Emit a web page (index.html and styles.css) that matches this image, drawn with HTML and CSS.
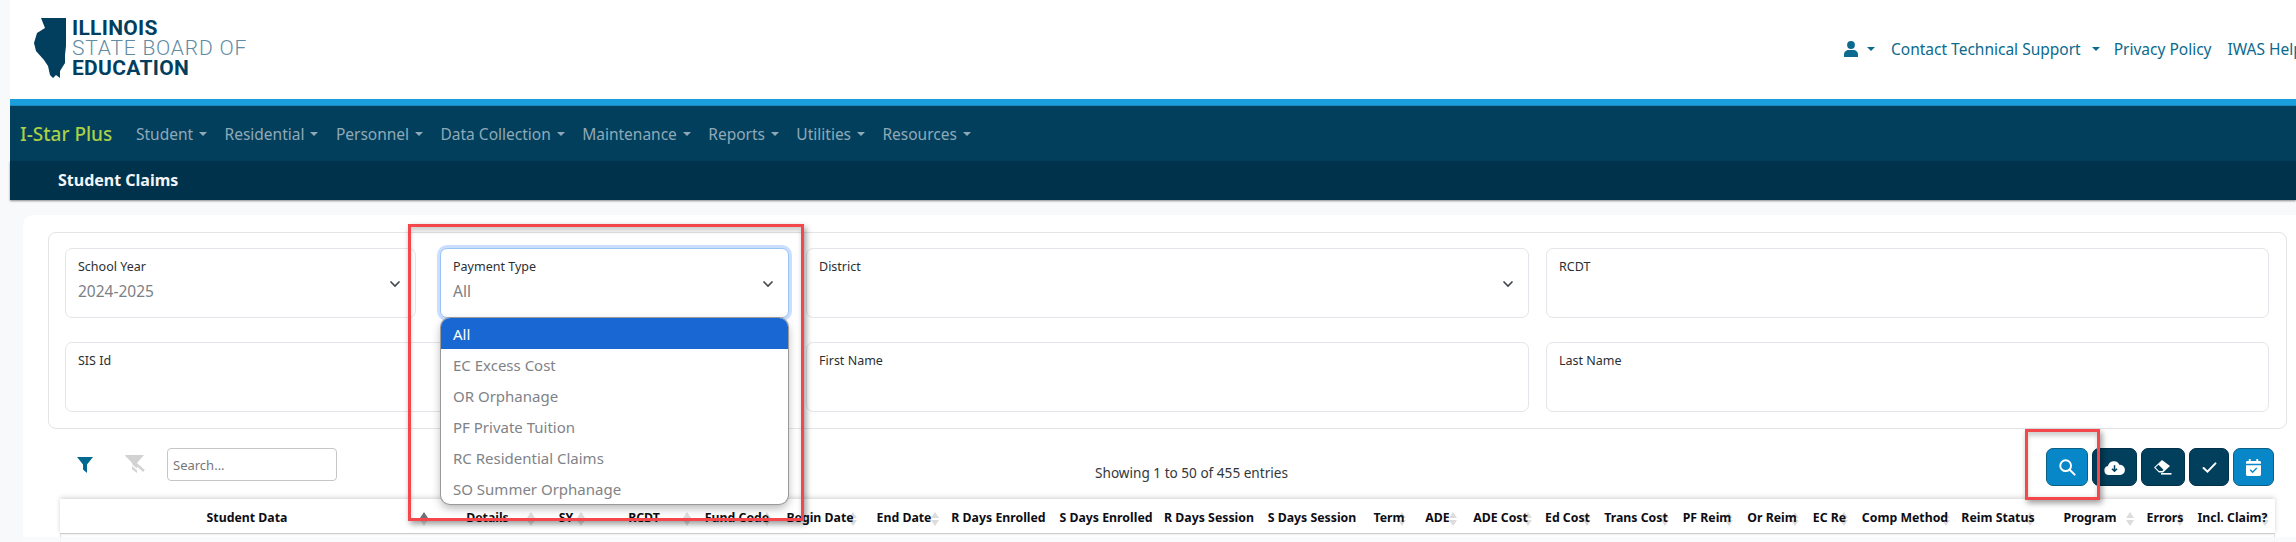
FILE: index.html
```html
<!DOCTYPE html>
<html lang="en">
<head>
<meta charset="utf-8">
<title>Student Claims</title>
<link rel="stylesheet" href="styles.css">
</head>
<body>
<div class="page">
  <header class="top">
    <div class="logo">
      <svg class="logo-state" viewBox="0 0 34 60" aria-hidden="true"><path d="M8 0H33V28L32 37 32 45 27 53 27 60 23 57 20 60 17 57 15 48 11 42 3 33 1 25 4 15 12 10Z"/></svg>
      <div class="logo-text">
        <div class="logo-bold">ILLINOIS</div>
        <div class="logo-light">STATE BOARD OF</div>
        <div class="logo-bold">EDUCATION</div>
      </div>
    </div>
    <nav class="top-links">
      <svg class="user-icon" viewBox="0 0 14 16" aria-hidden="true"><circle cx="7" cy="4" r="3.9"/><path d="M0 16v-2.5C0 10.5 2.5 9 4.5 9h5c2 0 4.5 1.500 4.500 4.500V16Z"/></svg>
      <span class="caret caret-user"></span>
      <a class="top-link">Contact Technical Support</a>
      <span class="caret caret-contact"></span>
      <a class="top-link link-privacy">Privacy Policy</a>
      <a class="top-link link-help">IWAS Help</a>
    </nav>
  </header>
  <div class="stripe"></div>
  <nav class="mainnav">
    <span class="brand">I-Star Plus</span>
    <span class="nav-item">Student<i class="caret"></i></span>
    <span class="nav-item">Residential<i class="caret"></i></span>
    <span class="nav-item">Personnel<i class="caret"></i></span>
    <span class="nav-item">Data Collection<i class="caret"></i></span>
    <span class="nav-item">Maintenance<i class="caret"></i></span>
    <span class="nav-item">Reports<i class="caret"></i></span>
    <span class="nav-item">Utilities<i class="caret"></i></span>
    <span class="nav-item">Resources<i class="caret"></i></span>
  </nav>
  <div class="subbar">Student Claims</div>
  <main class="card">
    <section class="filters">
      <div class="field field-first">
        <label>School Year</label><span class="value">2024-2025</span>
        <svg class="chev" viewBox="0 0 12 8" aria-hidden="true"><path d="M1.500 1.500 6 6l4.500-4.500"/></svg>
      </div>
      <div class="field field-focus">
        <label>Payment Type</label><span class="value">All</span>
        <svg class="chev" viewBox="0 0 12 8" aria-hidden="true"><path d="M1.500 1.500 6 6l4.500-4.500"/></svg>
      </div>
      <div class="field">
        <label>District</label>
        <svg class="chev" viewBox="0 0 12 8" aria-hidden="true"><path d="M1.500 1.500 6 6l4.500-4.500"/></svg>
      </div>
      <div class="field"><label>RCDT</label></div>
      <div class="field field-wide"><label>SIS Id</label></div>
      <div class="field"><label>First Name</label></div>
      <div class="field"><label>Last Name</label></div>
    </section>
    <section class="toolbar">
      <div class="tool-left">
        <svg class="filter-icon" viewBox="0 0 16 16" aria-hidden="true"><path d="M0 0H16L10 7.500V16L6 12.500V7.500Z"/></svg>
        <svg class="filter-off" viewBox="0 0 21 18" aria-hidden="true"><path d="M1 0H20L13 8V18L8 14V8Z"/><path class="slash-gap" d="M0 3 17 18"/><path class="slash" d="M2 0 20 16"/></svg>
        <input class="search" type="text" placeholder="Search...">
      </div>
      <div class="showing">Showing 1 to 50 of 455 entries</div>
      <div class="tool-right">
        <button class="btn btn-blue btn-search"><svg viewBox="0 0 20 20" aria-hidden="true"><circle cx="8.500" cy="8.500" r="6" class="st"/><path class="st" d="M13 13l5.500 5.500"/></svg></button>
        <button class="btn btn-dark btn-cloud"><svg viewBox="0 0 22 16" aria-hidden="true"><path class="fw" d="M5 16a4.800 4.800 0 0 1-1-9.500A6.500 6.500 0 0 1 16.200 5 5.500 5.500 0 0 1 17 16Z"/><path class="dk" d="M11 5.500v6M8.300 9.300 11 12l2.700-2.700"/></svg></button>
        <button class="btn btn-dark btn-erase"><svg viewBox="0 0 20 16" aria-hidden="true"><path class="fw" d="M9 1 1 8.500 6 13.500H10L17 7Z"/><path class="st2" d="M8 14.800H18.500"/><path class="dark-fill" d="M2.500 8.500 5.500 5.800 10.500 10.800 9.300 12H6Z"/></svg></button>
        <button class="btn btn-dark btn-check"><svg viewBox="0 0 16 12" aria-hidden="true"><path class="st" d="M1.500 6.500 5.800 10.500 14.500 1.500"/></svg></button>
        <button class="btn btn-blue btn-cal"><svg viewBox="0 0 16 18" aria-hidden="true"><path class="fw" d="M3 0h2v2h6V0h2v2h1.500A1.500 1.500 0 0 1 16 3.500V5H0V3.500A1.500 1.500 0 0 1 1.500 2H3ZM0 6.500H16V16.500A1.500 1.500 0 0 1 14.500 18H1.500A1.500 1.500 0 0 1 0 16.500Z"/><path class="bl" d="M4.500 11.500 7 14l4.500-4.500"/></svg></button>
      </div>
    </section>
    <section class="table-head">
      <div class="th th-active">Student Data<i class="sort"></i></div>
      <div class="th">Details<i class="sort"></i></div>
      <div class="th">SY<i class="sort"></i></div>
      <div class="th">RCDT<i class="sort"></i></div>
      <div class="th">Fund Code<i class="sort"></i></div>
      <div class="th">Begin Date<i class="sort"></i></div>
      <div class="th">End Date<i class="sort"></i></div>
      <div class="th">R Days Enrolled</div>
      <div class="th">S Days Enrolled</div>
      <div class="th">R Days Session</div>
      <div class="th">S Days Session</div>
      <div class="th">Term<i class="sort"></i></div>
      <div class="th">ADE<i class="sort"></i></div>
      <div class="th">ADE Cost<i class="sort"></i></div>
      <div class="th">Ed Cost<i class="sort"></i></div>
      <div class="th">Trans Cost<i class="sort"></i></div>
      <div class="th">PF Reim<i class="sort"></i></div>
      <div class="th">Or Reim<i class="sort"></i></div>
      <div class="th">EC Re<i class="sort"></i></div>
      <div class="th">Comp Method<i class="sort"></i></div>
      <div class="th">Reim Status<i class="sort"></i></div>
      <div class="th">Program<i class="sort"></i></div>
      <div class="th">Errors<i class="sort"></i></div>
      <div class="th">Incl. Claim?<i class="sort"></i></div>
    </section>
    <div class="table-body"></div>
  </main>

  <ul class="dropdown">
    <li class="selected">All</li>
    <li>EC Excess Cost</li>
    <li>OR Orphanage</li>
    <li>PF Private Tuition</li>
    <li>RC Residential Claims</li>
    <li>SO Summer Orphanage</li>
  </ul>
  <div class="mark mark-select"></div>
  <div class="mark mark-search"></div>
  <div class="bottom-band"></div>
</div>
</body>
</html>
```
FILE: styles.css
```css
* { box-sizing: border-box; }
html, body { margin: 0; padding: 0; }
body {
  width: 2296px;
  height: 542px;
  overflow: hidden;
  background: #f8f9fa;
  font-family: "Noto Sans", "Open Sans", sans-serif;
}
.page {
  position: relative;
  width: 2296px;
  height: 542px;
  padding-left: 10px;
  overflow: hidden;
}

/* top header */
.top {
  height: 99px;
  background: #fff;
  display: flex;
  align-items: flex-start;
  padding-left: 23px;
  overflow: hidden;
}
.logo { display: flex; flex: none; width: 300px; padding-top: 18px; }
.logo-state { width: 34px; height: 60px; fill: #023f5f; flex: none; }
.logo-text { margin-left: 5px; color: #023f5f; font-family: Roboto, sans-serif; font-size: 21px; line-height: 20px; }
.logo-bold { font-weight: 700; letter-spacing: 0.3px; }
.logo-light { font-weight: 300; color: #5f8ba3; letter-spacing: 0.8px; }
.top-links {
  flex: none;
  margin-left: 1511px;
  padding-top: 38px;
  display: flex;
  align-items: center;
  height: 60px;
  white-space: nowrap;
  color: #0b6a8e;
  font-size: 15.500px;
  line-height: 22px;
}
.user-icon { width: 14px; height: 16px; fill: #0b6a8e; }
.caret {
  display: inline-block;
  width: 0; height: 0;
  border-left: 4px solid transparent;
  border-right: 4px solid transparent;
  border-top: 4px solid currentColor;
}
.caret-user { margin: 0 16px 0 9px; }
.caret-contact { margin: 0 14px 0 11px; }
.link-help { margin-left: 16px; }

.stripe { height: 7px; background: #1a9fdc; border-bottom: 1px solid #1688bf; }

/* main nav */
.mainnav {
  height: 55px;
  background: #023f5c;
  display: flex;
  align-items: center;
  color: #8fa9b8;
  font-size: 15.500px;
  padding-left: 10px;
}
.brand { color: #a9d046; font-size: 19px; font-weight: 500; width: 116px; }
.nav-item { display: inline-flex; align-items: center; margin-right: 17.400px; }
.nav-item .caret { margin-left: 6px; }

.subbar {
  height: 39px;
  background: #01324b;
  color: #f2f5f7;
  font-size: 16px;
  font-weight: 700;
  line-height: 38px;
  padding-left: 48px;
  box-shadow: 0 1px 2px rgba(0, 0, 0, .45);
  position: relative;
}

/* card */
.card {
  margin: 15px 0 0 13px;
  height: 330px;
  background: #fff;
  border-radius: 10px 0 0 0;
  padding-top: 17px;
}
.filters {
  margin-left: 25px;
  width: 2239px;
  height: 197px;
  border: 1px solid #e3e3e8;
  border-radius: 8px;
  padding: 15px 0 0 16px;
  display: grid;
  grid-template-columns: 358px 349px 723px 723px;
  grid-template-rows: 70px 70px;
  column-gap: 17px;
  row-gap: 24px;
}
.field {
  position: relative;
  border: 1px solid #e4e4ea;
  border-radius: 7px;
  padding: 9px 12px 0;
  background: #fff;
}
.field-first { margin-right: 7px; }
.field-wide { grid-column: 1 / 3; }
.field-focus { border-color: #9cc3f5; box-shadow: 0 0 0 3px rgba(13, 110, 253, .22); }
.field label { display: block; color: #2b2f33; font-size: 12.500px; line-height: 18px; }
.value { display: block; margin-top: 4px; color: #7b8085; font-size: 15.500px; line-height: 22px; }
.chev {
  position: absolute; right: 14px; top: 31px;
  width: 12px; height: 8px;
  fill: none; stroke: #40454a; stroke-width: 1.600;
}

/* toolbar */
.toolbar {
  margin: 19px 0 0 54px;
  width: 2198px;
  height: 38px;
  display: flex;
  justify-content: space-between;
}
.tool-left { display: flex; align-items: flex-start; width: 260px; }
.filter-icon { width: 16px; height: 16px; margin-top: 9px; fill: #026a90; }
.filter-off { width: 21px; height: 18px; margin: 7px 0 0 31px; fill: #d2d2d2; overflow: hidden; }
.filter-off .slash { stroke: #d2d2d2; stroke-width: 2.500; fill: none; }
.filter-off .slash-gap { stroke: #fff; stroke-width: 1.500; fill: none; }
.search {
  margin-left: 22px;
  width: 170px; height: 33px;
  border: 1px solid #c4c6c8;
  border-radius: 4px;
  padding: 0 5px;
  font: 13px "Noto Sans", sans-serif;
  color: #555;
}
.search::placeholder { color: #777; opacity: 1; }
.showing { color: #33383d; font-size: 13.600px; line-height: 50px; }
.tool-right { display: flex; align-items: flex-start; width: 229px; gap: 4px; }
.btn {
  height: 38px;
  border-radius: 7px;
  padding: 0;
  display: flex;
  align-items: center;
  justify-content: center;
  border: 1px solid #0a5f85;
}
.btn-blue { background: #0787c8; }
.btn-dark { background: #023f5c; border-color: #023049; }
.btn-search { width: 42px; }
.btn-cloud { width: 45px; }
.btn-erase { width: 44px; }
.btn-check { width: 40px; }
.btn-cal { width: 41px; margin-left: 0; }
.btn svg { display: block; overflow: visible; }
.btn-search svg { width: 18px; height: 18px; }
.btn-cloud svg { width: 21px; height: 15px; }
.btn-erase svg { width: 20px; height: 16px; }
.btn-check svg { width: 15px; height: 11px; }
.btn-cal svg { width: 15px; height: 17px; }
.st { fill: none; stroke: #fff; stroke-width: 2.200; stroke-linecap: round; }
.st2 { fill: none; stroke: #fff; stroke-width: 1.600; }
.fw { fill: #fff; }
.dk { fill: none; stroke: #023f5c; stroke-width: 1.600; }
.bl { fill: none; stroke: #0787c8; stroke-width: 1.500; }
.dark-fill { fill: #023f5c; }

/* table head */
.table-head {
  margin: 13px 0 0 37px;
  width: 2215px;
  height: 35px;
  display: grid;
  grid-template-columns:
    374px 107px 50px 106px 80px 86px 82px 107px 108px 98px 108px 46px
    51px 75px 59px 78px 64px 66px 49px 102px 84px 100px 50px 85px;
  background: #fff;
  border-bottom: 1px solid #c9cbcd;
  box-shadow: 0 -2px 5px rgba(0, 0, 0, .12), 0 0 4px rgba(0, 0, 0, .06);
}
.th {
  position: relative;
  isolation: isolate;
  display: flex;
  align-items: center;
  justify-content: center;
  padding-top: 3px;
  color: #0d0d14;
  font-size: 12.300px;
  font-weight: 700;
  white-space: nowrap;
}
.sort {
  position: absolute;
  z-index: -1;
  right: 6px; top: 13px;
  width: 0; height: 0;
  border-left: 4px solid transparent;
  border-right: 4px solid transparent;
  border-bottom: 6px solid #dcdcdc;
}
.sort::after {
  content: "";
  position: absolute;
  left: -4px; top: 8px;
  width: 0; height: 0;
  border-left: 4px solid transparent;
  border-right: 4px solid transparent;
  border-top: 6px solid #dcdcdc;
}
.th-active .sort { border-bottom-color: #6d7074; }
.table-body {
  margin-left: 37px;
  width: 2215px;
  height: 9px;
  border-left: 1px solid #dfe0e2;
  border-right: 1px solid #dfe0e2;
}

/* open select list */
.dropdown {
  position: absolute;
  left: 441px; top: 318px;
  width: 347px; height: 186px;
  margin: 0; padding: 0;
  list-style: none;
  background: #fff;
  border-radius: 9px;
  overflow: hidden;
  font-size: 15px;
  color: #7f8388;
  box-shadow: 0 0 0 1px #9a9a9a, 0 4px 10px rgba(0, 0, 0, .3);
}
.dropdown li { height: 31px; line-height: 33px; padding-left: 12px; }
.dropdown .selected { background: #1967d2; color: #fff; }

/* red annotation boxes */
.mark {
  position: absolute;
  border: 3px solid #f4474c;
  box-shadow: 2px 3px 6px rgba(0, 0, 0, .4), inset 0 4px 4px rgba(0, 0, 0, .18);
}
.mark-select { left: 408px; top: 224px; width: 396px; height: 297px; }
.mark-search { left: 2025px; top: 429px; width: 75px; height: 71px; }

.bottom-band {
  position: absolute;
  left: 10px; right: 0; bottom: 0;
  height: 5px;
  background: rgba(248, 249, 250, .8);
}
```
